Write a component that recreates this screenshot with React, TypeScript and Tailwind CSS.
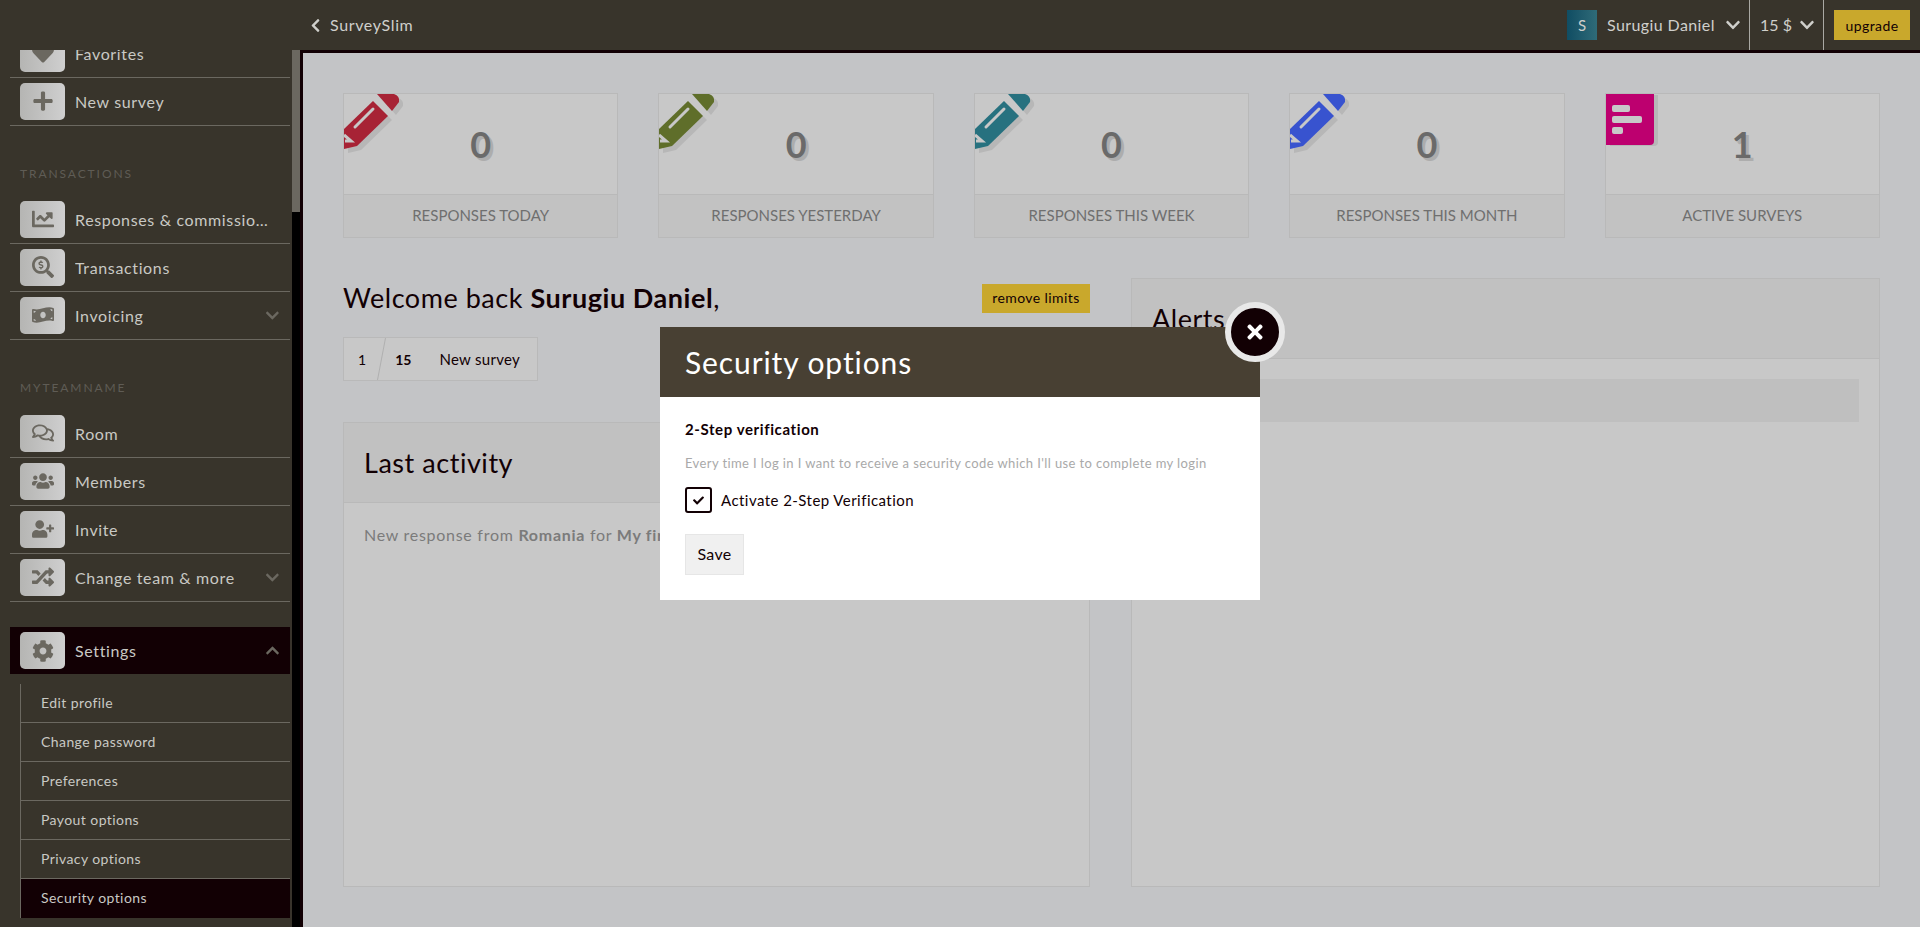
import type { ReactNode } from "react";
import {
  FaChartLine,
  FaCheck,
  FaChevronDown,
  FaChevronLeft,
  FaChevronUp,
  FaCog,
  FaHeart,
  FaMoneyBillWave,
  FaPlus,
  FaRandom,
  FaRegComments,
  FaSearchDollar,
  FaTimes,
  FaUserPlus,
  FaUsers,
} from "react-icons/fa";

const SideRow = ({ icon, label, arrow }: { icon: ReactNode; label: string; arrow?: boolean }) => (
  <div className="flex h-[48px] items-center border-b border-[#6b6860] pl-[10px] pr-[10px] pb-px">
    <div className="flex h-[37px] w-[45px] shrink-0 items-center justify-center rounded-[5px] bg-gradient-to-r from-[#b5b5b3] to-[#cfcfcf] text-[22px] text-[#6b6860]">
      {icon}
    </div>
    <p className="ml-[10px] w-[194px] truncate pt-[2px] text-[16px] tracking-[0.04em] text-[#c9c9c4]">{label}</p>
    {arrow && <FaChevronDown className="ml-auto text-[15px] text-[#6b6860]" />}
  </div>
);

const SectionLabel = ({ children }: { children: string }) => (
  <p className="pl-[10px] pt-[40px] pb-[14px] text-[12px] leading-4 tracking-[0.16em] text-[#5f5c55]">{children}</p>
);

const subItems = ["Edit profile", "Change password", "Preferences", "Payout options", "Privacy options"];

const Sidebar = () => (
  <div className="flex w-[300px] shrink-0 bg-[#000000]">
    <div className="h-full w-[292px] shrink-0 overflow-hidden bg-[#38342b] pl-[10px] pr-[2px]">
      <div className="-mt-[20px]">
        <SideRow icon={<FaHeart />} label="Favorites" />
        <SideRow icon={<FaPlus />} label="New survey" />
        <SectionLabel>TRANSACTIONS</SectionLabel>
        <SideRow icon={<FaChartLine />} label="Responses & commissions" />
        <SideRow icon={<FaSearchDollar />} label="Transactions" />
        <SideRow icon={<FaMoneyBillWave />} label="Invoicing" arrow />
        <SectionLabel>MYTEAMNAME</SectionLabel>
        <SideRow icon={<FaRegComments />} label="Room" />
        <SideRow icon={<FaUsers />} label="Members" />
        <SideRow icon={<FaUserPlus />} label="Invite" />
        <SideRow icon={<FaRandom />} label="Change team & more" arrow />
        <div className="mt-[25px] flex h-[47px] items-center bg-[#120004] pl-[10px] pr-[10px]">
          <div className="flex h-[37px] w-[45px] items-center justify-center rounded-[5px] bg-gradient-to-r from-[#b5b5b3] to-[#cfcfcf] text-[22px] text-[#6b6860]">
            <FaCog />
          </div>
          <p className="ml-[10px] text-[16px] tracking-[0.04em] text-[#c9c9c4]">Settings</p>
          <FaChevronUp className="ml-auto text-[15px] text-[#6b6860]" />
        </div>
        <div className="ml-[10px] mt-[10px] border-l border-[#6b6860]">
          {subItems.map((item) => (
            <p
              key={item}
              className="flex h-[39px] items-center border-b border-[#6b6860] pb-[2px] pl-[20px] text-[14px] tracking-[0.03em] text-[#c9c9c4]"
            >
              {item}
            </p>
          ))}
          <p className="flex h-[39px] items-center bg-[#120004] pb-[2px] pl-[20px] text-[14px] tracking-[0.03em] text-[#c9c9c4]">
            Security options
          </p>
        </div>
      </div>
    </div>
    <div className="w-[8px]">
      <div className="h-[162px] bg-[#6b6860]" />
    </div>
  </div>
);

const Pencil = ({ color }: { color: string }) => (
  <svg className="absolute left-0 top-0" width="64" height="64" viewBox="0 0 64 64">
    <g fill="#b7b7b7" transform="translate(4 4)">
      <path d="M33 0H50Q56 2 55 8L48 17Z" />
      <path d="M29 7L44 22L13 52L0 55V35Z" />
    </g>
    <path fill={color} d="M33 0H50Q56 2 55 8L48 17Z" />
    <path fill={color} d="M29 7L44 22L13 52L0 55V35Z" />
    <path d="M29 15L11 33" stroke="#c8c8c8" strokeWidth="3" strokeLinecap="round" />
    <path d="M0 41L7 47H1" stroke="#c8c8c8" strokeWidth="3" fill="none" />
  </svg>
);

const Flag = () => (
  <div className="absolute left-0 top-0 flex h-[51px] w-[48px] flex-col gap-[4px] rounded-br-[4px] bg-[#bd006f] pl-[6px] pt-[11px] shadow-[4px_1px_0_#b7b7b7]">
    <div className="h-[7px] w-[18px] rounded-[2px] bg-[#c8c8c8]" />
    <div className="h-[7px] w-[30px] rounded-[2px] bg-[#c8c8c8]" />
    <div className="h-[7px] w-[11px] rounded-[2px] bg-[#c8c8c8]" />
  </div>
);

const StatCard = ({ icon, value, label }: { icon: ReactNode; value: string; label: string }) => (
  <div className="relative h-[145px] overflow-hidden border border-[#b9b9b9] bg-[#c8c8c8]">
    {icon}
    <div className="flex h-[101px] items-center justify-center border-b border-[#b9b9b9] text-[36px] font-bold text-[#6a6a6a] [text-shadow:3px_3px_0_#adadad]">
      {value}
    </div>
    <div className="flex h-[42px] items-center justify-center bg-[#c2c2c2] pb-px text-[15px] text-[#6f6f6f]">
      {label}
    </div>
  </div>
);

const Panel = ({ title, children, className }: { title: string; children: ReactNode; className: string }) => (
  <div className={`border border-[#b9b9b9] bg-[#c8c8c8] ${className}`}>
    <div className="flex h-[80px] items-center border-b border-[#b9b9b9] bg-[#c1c1c1] px-[20px] pt-px text-[27px] tracking-[0.02em] text-[#120004]">
      {title}
    </div>
    {children}
  </div>
);

const Modal = () => (
  <div className="absolute left-[660px] top-[327px] h-[273px] w-[600px] bg-white">
    <div className="flex h-[70px] items-center bg-[#484033] px-[25px] text-[30px] tracking-[0.03em] text-white">
      Security options
    </div>
    <div className="px-[25px] pt-[22px]">
      <p className="text-[15px] font-bold leading-5 tracking-[0.04em] text-[#120004]">2-Step verification</p>
      <p className="mt-[14px] text-[13px] leading-5 tracking-[0.03em] text-[#a9a9a9]">
        Every time I log in I want to receive a security code which I'll use to complete my login
      </p>
      <div className="mt-[14px] flex items-center">
        <div className="flex h-[26px] w-[27px] items-center justify-center rounded-[3px] border-2 border-[#120004] text-[11px] text-[#120004]">
          <FaCheck />
        </div>
        <p className="ml-[9px] text-[15px] tracking-[0.03em] text-[#120004]">Activate 2-Step Verification</p>
      </div>
      <button className="mt-[21px] flex h-[41px] w-[59px] items-center justify-center border border-[#e6e6e6] bg-[#f0f0f0] pb-[2px] text-[16px] tracking-[0.02em] text-[#120004]">
        Save
      </button>
    </div>
    <div className="absolute -right-[25px] -top-[25px] flex h-[60px] w-[60px] items-center justify-center rounded-full border-[6px] border-[#e8e8e8] bg-[#120004] text-[22px] text-white">
      <FaTimes />
    </div>
  </div>
);

export default function App() {
  return (
    <div className="relative flex h-[927px] flex-col overflow-hidden font-['Lato',sans-serif]">
      <header className="flex h-[50px] shrink-0 items-center bg-[#38342b] text-[#cfcfcb]">
        <FaChevronLeft className="ml-[308px] text-[15px]" />
        <p className="ml-[7px] text-[16px] tracking-[0.04em]">SurveySlim</p>
        <div className="ml-auto flex h-full items-center">
          <div className="flex h-[30px] w-[30px] items-center justify-center bg-gradient-to-r from-[#0f4d63] to-[#2f6b78] text-[15px]">
            S
          </div>
          <p className="ml-[10px] w-[108px] whitespace-nowrap text-[16px] tracking-[0.025em]">Surugiu Daniel</p>
          <FaChevronDown className="ml-[10px] text-[16px]" />
          <div className="ml-[8px] h-full w-px bg-[#aaa9a4]" />
          <p className="ml-[10px] w-[29px] whitespace-nowrap text-[16px]">15 $</p>
          <FaChevronDown className="ml-[10px] text-[16px]" />
          <div className="ml-[8px] h-full w-px bg-[#aaa9a4]" />
          <button className="ml-[10px] mr-[10px] h-[30px] w-[76px] bg-[#c9a82c] text-[14px] tracking-[0.03em] text-[#120004]">
            upgrade
          </button>
        </div>
      </header>
      <div className="flex min-h-0 flex-1">
        <Sidebar />
        <main className="flex-1 border-l-[3px] border-t-[3px] border-[#120004] bg-[#c3c4c6] px-[40px] pt-[40px]">
          <div className="grid grid-cols-5 gap-[40px]">
            <StatCard icon={<Pencil color="#a72335" />} value="0" label="RESPONSES TODAY" />
            <StatCard icon={<Pencil color="#5f6e2a" />} value="0" label="RESPONSES YESTERDAY" />
            <StatCard icon={<Pencil color="#27717f" />} value="0" label="RESPONSES THIS WEEK" />
            <StatCard icon={<Pencil color="#3853cf" />} value="0" label="RESPONSES THIS MONTH" />
            <StatCard icon={<Flag />} value="1" label="ACTIVE SURVEYS" />
          </div>
          <div className="mt-[40px] grid grid-cols-[747px_1fr] gap-[41px]">
            <div>
              <div className="flex h-[40px] items-center justify-between">
                <p className="text-[27px] tracking-[0.02em] text-[#120004]">
                  Welcome back <b>Surugiu Daniel</b>,
                </p>
                <button className="h-[29px] w-[108px] bg-[#c9a82c] pb-px text-[14px] tracking-[0.03em] text-[#120004]">
                  remove limits
                </button>
              </div>
              <div className="mt-[19px] flex h-[44px] w-[195px] items-center border border-[#b9b9b9] bg-[#c8c8c8] text-[14px] text-[#120004]">
                <span className="ml-[14px]">1</span>
                <svg className="ml-[11px]" width="9" height="42" viewBox="0 0 9 42">
                  <path d="M8.5 0L0.5 42" stroke="#b0b0b0" />
                </svg>
                <b className="ml-[9px]">15</b>
                <span className="ml-[28px] text-[15px] tracking-[0.02em]">New survey</span>
              </div>
              <Panel title="Last activity" className="mt-[41px] h-[465px]">
                <p className="px-[20px] pt-[20px] text-[16px] tracking-[0.045em] text-[#7b7b7b]">
                  New response from <b>Romania</b> for <b>My first survey</b>
                </p>
              </Panel>
            </div>
            <Panel title="Alerts" className="h-[609px]">
              <div className="mx-[20px] mt-[20px] h-[43px] bg-[#bfbfbf]" />
            </Panel>
          </div>
        </main>
      </div>
      <Modal />
    </div>
  );
}
